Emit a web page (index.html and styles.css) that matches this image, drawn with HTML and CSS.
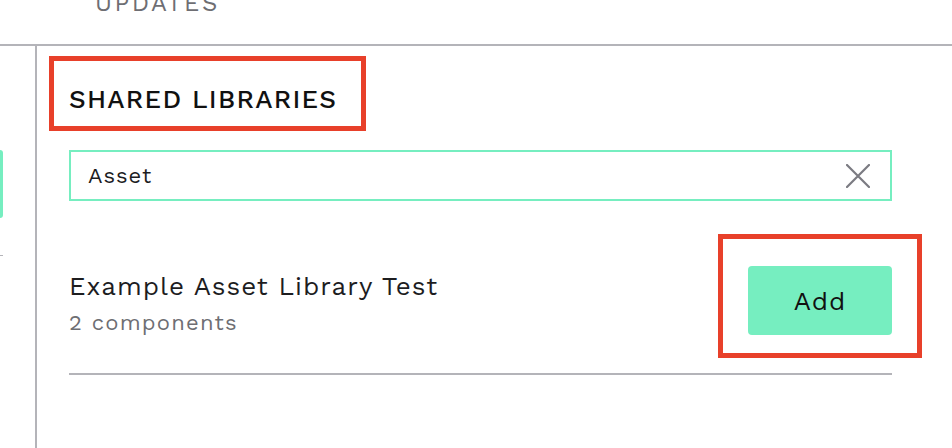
FILE: index.html
```html
<!DOCTYPE html>
<html lang="en">
<head>
    <meta charset="UTF-8">
    <meta name="viewport" content="width=device-width, initial-scale=1.0">
    <title>Shared Libraries</title>
    <link rel="stylesheet" href="styles.css">
</head>
<body>
    <div class="topbar">
        <span class="tab">UPDATES</span>
    </div>
    <div class="main">
        <div class="sidebar">
            <div class="side-button"></div>
            <div class="side-rule"></div>
        </div>
        <div class="panel">
            <h2 class="panel-title">SHARED LIBRARIES</h2>
            <div class="search">
                <span class="search-text">Asset</span>
                <svg class="clear" width="24" height="24" viewBox="0 0 24 24">
                    <path d="M1 1 L23 23 M23 1 L1 23" stroke="#7b7b82" stroke-width="2.2" stroke-linecap="round" fill="none"/>
                </svg>
            </div>
            <div class="library">
                <div class="library-info">
                    <div class="library-name">Example Asset Library Test</div>
                    <div class="library-count">2 components</div>
                </div>
                <div class="add-wrap">
                    <button class="add-button">Add</button>
                </div>
            </div>
        </div>
    </div>
</body>
</html>
```

FILE: styles.css
```css
body {
    margin: 0;
    font-family: "Work Sans", Inter, "Noto Sans", sans-serif;
    background: #fff;
    color: #1d1d1f;
    height: 448px;
    overflow: hidden;
}

/* Top tab bar, mostly scrolled out of view */
.topbar {
    height: 44px;
    border-bottom: 2px solid #b4b4b9;
    overflow: hidden;
}
.tab {
    display: block;
    margin-left: 95px;
    margin-top: -11px;
    font-size: 24px;
    letter-spacing: 2.5px;
    color: #6e6e73;
    line-height: 28px;
}

.main {
    display: flex;
    height: 402px;
}

.sidebar {
    width: 35px;
    border-right: 2px solid #b4b4b9;
    padding-top: 104px;
}
.side-button {
    width: 3px;
    height: 68px;
    background: #76eec0;
    border-radius: 0 4px 4px 0;
}
.side-rule {
    width: 3px;
    height: 1px;
    background: #b4b4b9;
    margin-top: 37px;
}

.panel {
    flex: 1;
    padding: 0 60px 0 32px;
}

/* Heading, framed by the red annotation box */
.panel-title {
    display: inline-block;
    margin: 10px 0 0 -20px;
    padding: 6px 24px 0 15px;
    border: 5px solid #e8402a;
    height: 59px;
    line-height: 65px;
    font-size: 26px;
    font-weight: 500;
    letter-spacing: 1.25px;
    color: #111;
}

.search {
    margin-top: 19px;
    height: 47px;
    border: 2px solid #76eec0;
    display: flex;
    align-items: center;
    justify-content: space-between;
    padding: 0 20px 0 17px;
}
.search-text {
    font-size: 22px;
    letter-spacing: 1px;
    color: #1d1d1f;
}
.clear {
    display: block;
}

.library {
    display: flex;
    align-items: flex-start;
    justify-content: space-between;
    margin-top: 65px;
    padding-bottom: 35px;
    border-bottom: 2px solid #b4b4b9;
}
.library-info {
    margin-top: 4px;
}
.library-name {
    font-size: 26px;
    letter-spacing: 1px;
    color: #1d1d1f;
    line-height: 32px;
}
.library-count {
    font-size: 22px;
    letter-spacing: 1.2px;
    color: #6e6e73;
    line-height: 30px;
    margin-top: 6px;
}

.add-wrap {
    position: relative;
}
/* red annotation box drawn over the button area */
.add-wrap::after {
    content: "";
    position: absolute;
    top: -32px;
    bottom: -23px;
    left: -30px;
    right: -30px;
    border: 5px solid #e8402a;
    pointer-events: none;
}
.add-button {
    display: block;
    width: 144px;
    height: 69px;
    background: #76eec0;
    border: none;
    border-radius: 4px;
    font-family: inherit;
    font-size: 26px;
    letter-spacing: 1px;
    color: #111;
}
```
